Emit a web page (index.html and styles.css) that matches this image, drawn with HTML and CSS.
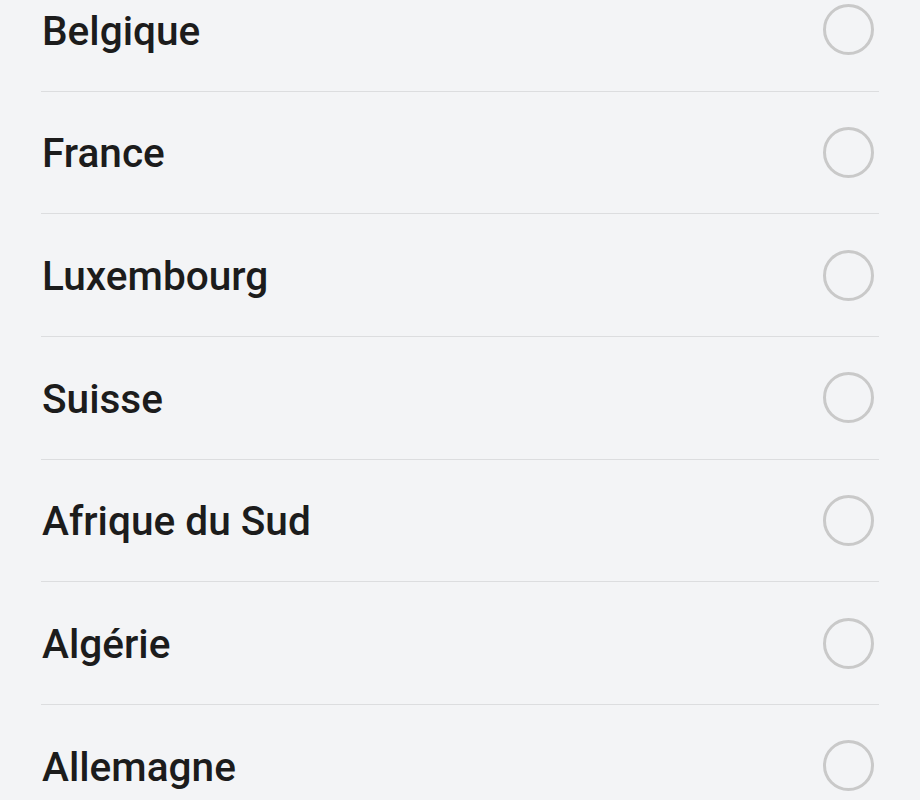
FILE: index.html
```html
<!DOCTYPE html>
<html lang="fr">

<head>
    <meta charset="UTF-8">
    <meta name="viewport" content="width=device-width, initial-scale=1.0">
    <title>Pays</title>
    <link rel="stylesheet" href="styles.css">
</head>

<body>
    <!-- Liste des pays -->
    <ul class="country-list">
        <li class="country"><span class="name">Belgique</span><span class="radio"></span></li>
        <li class="country"><span class="name">France</span><span class="radio"></span></li>
        <li class="country"><span class="name">Luxembourg</span><span class="radio"></span></li>
        <li class="country"><span class="name">Suisse</span><span class="radio"></span></li>
        <li class="country"><span class="name">Afrique du Sud</span><span class="radio"></span></li>
        <li class="country"><span class="name">Algérie</span><span class="radio"></span></li>
        <li class="country"><span class="name">Allemagne</span><span class="radio"></span></li>
    </ul>
</body>

</html>
```

FILE: styles.css
```css
* {
    margin: 0;
    padding: 0;
    box-sizing: border-box;
}

body {
    background-color: #f3f4f6;
    color: #1c1c1c;
    font-family: Roboto, 'Noto Sans', sans-serif;
    overflow: hidden;
}

/* Liste */
.country-list {
    list-style: none;
    margin: -31px 41px 0 41px;
}

.country {
    display: flex;
    align-items: center;
    justify-content: space-between;
    height: 122.67px;
    border-bottom: 1px solid #dcdddf;
}

.name {
    font-size: 40.6px;
    font-weight: 500;
    padding-left: 1px;
    padding-top: 2px;
}

.radio {
    width: 51px;
    height: 51px;
    border: 3px solid #c9c9c9;
    border-radius: 50%;
    margin-right: 5px;
}
```
